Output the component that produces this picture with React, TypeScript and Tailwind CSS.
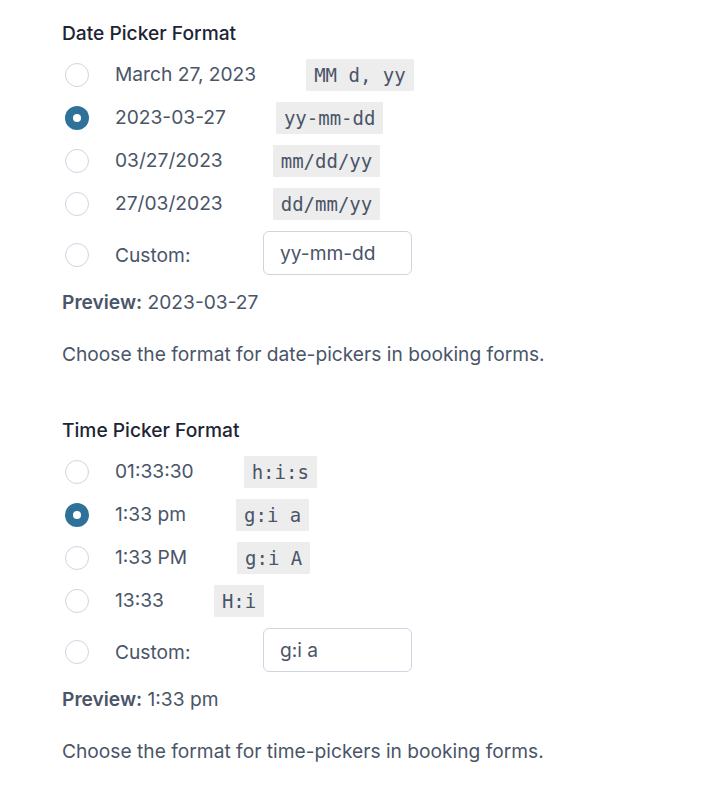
import React, { useState } from 'react';

type Option = { label: string; code: string };

const dateOptions: Option[] = [
  { label: 'March 27, 2023', code: 'MM d, yy' },
  { label: '2023-03-27', code: 'yy-mm-dd' },
  { label: '03/27/2023', code: 'mm/dd/yy' },
  { label: '27/03/2023', code: 'dd/mm/yy' },
];

const timeOptions: Option[] = [
  { label: '01:33:30', code: 'h:i:s' },
  { label: '1:33 pm', code: 'g:i a' },
  { label: '1:33 PM', code: 'g:i A' },
  { label: '13:33', code: 'H:i' },
];

function Radio({ checked, className = '' }: { checked: boolean; className?: string }) {
  return checked ? (
    <span className={`ml-[3px] flex h-6 w-6 shrink-0 items-center justify-center rounded-full bg-[#2e7199] ${className}`}>
      <span className="h-2 w-2 rounded-full bg-white" />
    </span>
  ) : (
    <span className={`ml-[3px] h-6 w-6 shrink-0 rounded-full border border-[#cdd5e0] bg-white ${className}`} />
  );
}

function FormatSection({
  title,
  options,
  selected,
  custom,
  preview,
  help,
}: {
  title: string;
  options: Option[];
  selected: number;
  custom: string;
  preview: string;
  help: string;
}) {
  const [value, setValue] = useState(custom);

  return (
    <div className="flex flex-col">
      <h3 className="h-7 text-[19.2px] leading-7 font-medium text-[#1d2433]">{title}</h3>
      <div className="mt-[6px] flex flex-col">
        {options.map((opt, i) => (
          <label key={opt.code} className="flex h-[43px] items-center">
            <Radio checked={i === selected} />
            <span className="ml-[26px] text-[19.2px] text-[#4a5568]">{opt.label}</span>
            <code className="ml-[50px] rounded-[1px] bg-[#ededed] px-2 py-[3px] font-['DejaVu_Sans_Mono',monospace] text-[19px] leading-[26px] text-[#4a5568]">
              {opt.code}
            </code>
          </label>
        ))}
        <label className="mt-[6px] flex items-center">
          <Radio checked={false} className="mt-[4px]" />
          <span className="mt-[4px] ml-[26px] w-[148px] text-[19.2px] text-[#4a5568]">Custom:</span>
          <input
            value={value}
            onChange={(e) => setValue(e.target.value)}
            className="h-[44px] w-[149px] rounded-md border border-[#cdd5e0] bg-white px-4 text-[19.2px] text-[#4a5568] outline-none"
          />
        </label>
      </div>
      <p className="mt-[13px] h-7 text-[19.2px] leading-7 text-[#4a5568]">
        <span className="font-semibold">Preview:</span> {preview}
      </p>
      <p className="mt-6 h-7 text-[19.2px] leading-7 text-[#4a5568]">{help}</p>
    </div>
  );
}

export default function App() {
  return (
    <div className="min-h-screen bg-white px-[62px] pt-[19px] font-['Inter',sans-serif]">
      <FormatSection
        title="Date Picker Format"
        options={dateOptions}
        selected={1}
        custom="yy-mm-dd"
        preview="2023-03-27"
        help="Choose the format for date-pickers in booking forms."
      />
      <div className="mt-[48px]">
        <FormatSection
          title="Time Picker Format"
          options={timeOptions}
          selected={1}
          custom="g:i a"
          preview="1:33 pm"
          help="Choose the format for time-pickers in booking forms."
        />
      </div>
    </div>
  );
}
